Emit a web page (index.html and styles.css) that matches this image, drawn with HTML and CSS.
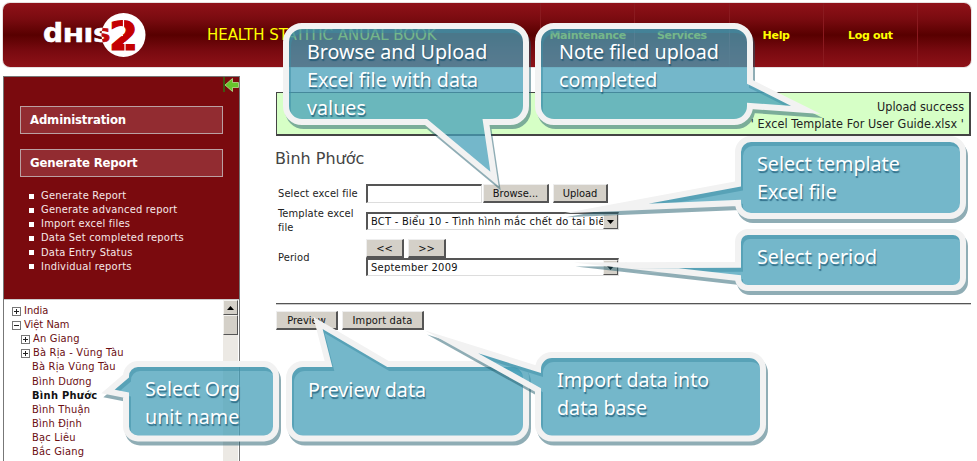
FILE: index.html
```html
<!DOCTYPE html>
<html lang="en">
<head>
<meta charset="utf-8">
<title>DHIS 2</title>
<link rel="stylesheet" href="styles.css">
</head>
<body>
<div class="page">
  <header class="header">
    <svg class="logo" width="106" height="50" viewBox="40 10 106 50">
      <defs><clipPath id="disc"><circle cx="123.500" cy="35" r="22"/></clipPath></defs>
      <circle cx="123.500" cy="35" r="22" fill="#fff"/>
      <text class="logo-d" x="43" y="42" textLength="20" lengthAdjust="spacingAndGlyphs" fill="#fff" stroke="#fff">d</text>
      <text class="logo-his" x="63" y="42" textLength="48" lengthAdjust="spacingAndGlyphs" fill="#fff" stroke="#fff">HIS</text>
      <g clip-path="url(#disc)">
        <text class="logo-his" x="63" y="42" textLength="48" lengthAdjust="spacingAndGlyphs" fill="#c00a0a" stroke="#c00a0a">HIS</text>
      </g>
      <text class="logo-two" x="109" y="49.500" textLength="29" lengthAdjust="spacingAndGlyphs" fill="#c40000" stroke="#c40000">2</text>
      <path d="M123.500 19v8M111 36.500l12-1M125 42v9" stroke="#fff" stroke-width="1.200"/>
    </svg>
    <h1 class="title">HEALTH STATITIC ANUAL BOOK</h1>
    <nav class="menu">
      <a>Maintenance</a><a>Services</a><a>Help</a><a>Log out</a>
    </nav>
  </header>

  <div class="columns">
    <aside class="sidebar">
      <div class="side-menu">
        <svg class="hide-arrow" width="16" height="16" viewBox="0 0 16 16">
          <path d="M1 0v15" stroke="#2f7010" stroke-width="1.500"/>
          <path d="M2 8l7.500-6.500v4H15.500v5H9.500v4z" fill="#66c52c" stroke="#b5e590" stroke-width=".8"/>
        </svg>
        <h2>Administration</h2>
        <h2 class="second">Generate Report</h2>
        <ul>
          <li>Generate Report</li>
          <li>Generate advanced report</li>
          <li>Import excel files</li>
          <li>Data Set completed reports</li>
          <li>Data Entry Status</li>
          <li>Individual reports</li>
        </ul>
      </div>
      <div class="tree-pane">
        <ul class="tree">
          <li class="root"><i class="box plus"></i>India</li>
          <li class="root"><i class="box"></i>Việt Nam</li>
          <li><i class="box plus"></i>An Giang</li>
          <li><i class="box plus"></i>Bà Rịa - Vũng Tàu</li>
          <li class="leaf">Bà Rịa Vũng Tàu</li>
          <li class="leaf">Bình Dương</li>
          <li class="leaf current">Bình Phước</li>
          <li class="leaf">Bình Thuận</li>
          <li class="leaf">Bình Định</li>
          <li class="leaf">Bạc Liêu</li>
          <li class="leaf">Bắc Giang</li>
        </ul>
        <div class="scrollbar">
          <div class="scroll-up"><svg width="7" height="4"><path d="M0 4l3.500-4L7 4z"/></svg></div>
          <div class="scroll-thumb"></div>
        </div>
      </div>
    </aside>

    <main class="content">
      <div class="message">Upload success<br><span class="filename">' Excel Template For User Guide.xlsx '</span></div>
      <h3>Bình Phước</h3>
      <div class="form">
        <label class="file-label">Select excel file</label>
        <div class="file-row"><span class="field"></span><span class="btn browse">Browse...</span><span class="btn upload">Upload</span></div>
        <label class="template-label">Template excel file</label>
        <div class="select"><span class="value template">BCT - Biểu 10 - Tình hình mắc chết do tai biến</span><span class="drop"><svg width="7" height="4"><path d="M0 0h7L3.500 4z"/></svg></span></div>
        <label class="period-label">Period</label>
        <div class="period">
          <div class="steps"><span class="btn">&lt;&lt;</span><span class="btn">&gt;&gt;</span></div>
          <div class="select"><span class="value">September 2009</span><span class="drop"><svg width="7" height="4"><path d="M0 0h7L3.500 4z"/></svg></span></div>
        </div>
      </div>
      <div class="rule"></div>
      <div class="actions"><span class="btn preview">Preview</span><span class="btn import">Import data</span></div>
    </main>
  </div>

  <svg class="callouts" width="977" height="461" viewBox="0 0 977 461">
    <defs>
      <path id="c5" d="M303 364H328.500L318 323L388 364H512A14 14 0 0 1 526 378V424.500A14 14 0 0 1 512 438.500H303A14 14 0 0 1 289 424.500V378A14 14 0 0 1 303 364Z"/>
      <path id="c1" d="M302 26H510A16 16 0 0 1 526 42V106A16 16 0 0 1 510 122H486L494.500 179L426 122H302A16 16 0 0 1 286 106V42A16 16 0 0 1 302 26Z"/>
      <path id="c2" d="M554 26H734A16 16 0 0 1 750 42V82L806 110L750 106A16 16 0 0 1 734 122H554A16 16 0 0 1 538 106V42A16 16 0 0 1 554 26Z"/>
      <path id="c3" d="M751 139H950A13 13 0 0 1 963 152V203A13 13 0 0 1 950 216H751A13 13 0 0 1 738 203L606 208.500L738 184V152A13 13 0 0 1 751 139Z"/>
      <path id="c4" d="M748 232H953A10 10 0 0 1 963 242V278A10 10 0 0 1 953 288H748A10 10 0 0 1 738 278L625 265.300L738 264.800V242A10 10 0 0 1 748 232Z"/>
      <path id="c6" d="M552 355H749A14 14 0 0 1 763 369V424.500A14 14 0 0 1 749 438.500H552A14 14 0 0 1 538 424.500V390L452 342L538 369A14 14 0 0 1 552 355Z"/>
      <path id="c7" d="M138 364H264A12 12 0 0 1 276 376V426.500A12 12 0 0 1 264 438.500H138A12 12 0 0 1 126 426.500V395L108 391.500L126 376A12 12 0 0 1 138 364Z"/>
    </defs>
    <g><use class="shade" href="#c1"/><use class="bubble" href="#c1"/></g>
    <g><use class="shade" href="#c2"/><use class="bubble" href="#c2"/></g>
    <g><use class="shade" href="#c3"/><use class="bubble" href="#c3"/></g>
    <g><use class="shade" href="#c4"/><use class="bubble" href="#c4"/></g>
    <g><use class="shade" href="#c5"/><use class="bubble" href="#c5"/></g>
    <g><use class="shade" href="#c6"/><use class="bubble" href="#c6"/></g>
    <g><use class="shade" href="#c7"/><use class="bubble" href="#c7"/></g>
  </svg>
  <p class="note n1">Browse and Upload<br>Excel file with data<br>values</p>
  <p class="note n2">Note filed upload<br>completed</p>
  <p class="note n3">Select template<br>Excel file</p>
  <p class="note n4">Select period</p>
  <p class="note n5">Preview data</p>
  <p class="note n6">Import data into<br>data base</p>
  <p class="note n7">Select Org<br>unit name</p>
</div>
</body>
</html>
```
FILE: styles.css
```css
* { box-sizing: border-box; }
body { margin: 0; background: #fff; }
h1, h2, h3, ul, p { margin: 0; padding: 0; font-weight: normal; list-style: none; }
.page {
  position: relative; width: 977px; height: 461px; overflow: hidden; padding: 3px 6px 0 3px;
  font: 11px/14px "DejaVu Sans Condensed", "DejaVu Sans", sans-serif; font-stretch: condensed; color: #222;
}
.header {
  height: 64px; width: 968px; border-radius: 7px; display: flex; align-items: center; overflow: hidden;
  background: linear-gradient(#901219, #7a0b10 25%, #580000 50%, #790a10 75%, #8e1118);
  box-shadow: 0 0 0 1px #e8e0e0;
}
.logo { margin-left: 37px; flex: none; }
.logo text { font-family: "DejaVu Sans", sans-serif; font-weight: bold; }
.logo-d { font-size: 26px; stroke-width: .5px; }
.logo-his { font-size: 19px; stroke-width: .6px; }
.logo-two { font-size: 39px; stroke-width: 1px; }
.title {
  margin-left: 61px; width: 333px; color: #ff0; white-space: nowrap; letter-spacing: -.05px;
  font: 15px/20px "DejaVu Sans", sans-serif; font-stretch: normal;
}
.menu { display: flex; align-self: stretch; border-right: 1px solid #8a1a1f; }
.menu a {
  width: 94.250px; border-left: 1px solid #8a1a1f; text-align: center;
  font: bold 11px/14px "DejaVu Sans", sans-serif; padding-top: 26px; color: #ff0; letter-spacing: -.3px;
}
.columns { display: flex; margin-top: 9px; }
.sidebar { width: 237px; height: 385px; border: 1px solid #777; border-bottom: 0; flex: none; }
.side-menu { height: 222px; background: #7a0a0e; padding: 0 16px; color: #fff; display: flow-root; }
.hide-arrow { display: block; margin: 0 -16px 0 auto; }
.side-menu h2 {
  height: 28px; margin-top: 13px; border: 1px solid #bba0a2; background: #922c31; padding-left: 9px;
  font: bold 13px/26px "DejaVu Sans Condensed", "DejaVu Sans", sans-serif; font-stretch: condensed; letter-spacing: -.15px;
}
.side-menu h2.second { margin-top: 15px; }
.side-menu ul { margin-top: 12px; }
.side-menu li { display: flex; align-items: center; padding-left: 9px; height: 14.150px; color: #f6e8e8; letter-spacing: .22px; }
.side-menu li::before { content: ""; width: 5px; height: 5px; background: #fff; margin-right: 7px; }
.tree-pane { display: flex; height: 162px; overflow: hidden; border-top: 1px solid #ccc; }
.tree { flex: 1; padding: 4px 0 0 17px; color: #6b0e12; white-space: nowrap; letter-spacing: .2px; }
.tree li { height: 14.120px; display: flex; align-items: center; }
.tree .root { margin-left: -9px; letter-spacing: 0; }
.tree .leaf { padding-left: 11px; }
.tree .current { font-weight: bold; color: #111; letter-spacing: .3px; }
.box {
  width: 9px; height: 9px; border: 1px solid #777; margin-right: 3px; flex: none;
  background: linear-gradient(#222, #222) center / 5px 1px no-repeat;
}
.box.plus { background: linear-gradient(#222, #222) center / 5px 1px no-repeat, linear-gradient(#222, #222) center / 1px 5px no-repeat; }
.scrollbar { width: 15px; margin-right: 1px; background: #ece9e4; }
.scroll-up, .scroll-thumb, .drop { background: #d4d0c8; border: 1px solid #f4f3f0; border-right-color: #555; border-bottom-color: #555; }
.scroll-up { height: 15px; display: flex; align-items: center; justify-content: center; }
.scroll-thumb { height: 20px; }
.content { margin-left: 36px; width: 695px; padding-top: 16px; }
.message {
  height: 44px; border: 1px solid #444; border-right-width: 2px; border-bottom-width: 2px; background: #d6ffc6;
  text-align: right; font-size: 12.500px; line-height: 17px; padding: 5px 5px 0 0; color: #222;
}
.filename { letter-spacing: .07px; }
.content h3 {
  margin: 13px 0 0 -1px; color: #444;
  font: 16px/20px "DejaVu Sans", sans-serif; font-stretch: normal;
}
.form { display: grid; grid-template-columns: 88px auto; margin: 15px 0 0 2px; align-items: center; }
.form label { letter-spacing: .12px; }
.file-label { white-space: nowrap; }
.file-row { display: flex; height: 20px; }
.field, .select { border: 1px solid #ddd; border-top: 2px solid #555; border-left: 2px solid #555; background: #fff; }
.field { width: 116px; height: 19px; }
.btn {
  height: 19px; border: 1px solid #eee; border-right: 2px solid #555; border-bottom: 2px solid #555;
  background: #d4d0c8; color: #111; text-align: center; line-height: 18px; white-space: nowrap;
}
.browse { width: 66px; margin-left: 1px; }
.upload { width: 55px; margin-left: 4px; }
.select { width: 253px; height: 18px; display: flex; overflow: hidden; }
.value { flex: 1; overflow: hidden; white-space: nowrap; padding-left: 3px; line-height: 16px; color: #111; letter-spacing: .27px; }
.drop { width: 15px; display: flex; align-items: center; justify-content: center; }
.template-label { margin: 3px 0 0; }
.period { margin-top: 4px; }
.steps { display: flex; gap: 4px; }
.steps .btn { width: 38px; }
.template-label + .select { margin-top: 3px; }
.period-label { padding-top: 5px; }
.rule { height: 2px; margin-top: 27px; border-top: 1px solid #555; border-bottom: 1px solid #ccc; }
.actions { display: flex; gap: 4px; margin-top: 6px; }
.preview { width: 62px; }
.import { width: 82px; letter-spacing: .15px; }
.callouts { position: absolute; left: 0; top: 0; }
.bubble { fill: rgba(70, 159, 184, .75); stroke: #f2f2f2; stroke-width: 6px; stroke-miterlimit: 40; }
.shade { fill: none; stroke: rgba(32, 92, 108, .5); stroke-width: 6px; stroke-miterlimit: 40; transform: translate(2px, 4px); }
.note {
  position: absolute; font: 19.700px/28px "Noto Sans", "Open Sans", sans-serif; color: #fff; white-space: nowrap;
  text-shadow: 1px 2px 1px rgba(20, 80, 110, .7);
}
.n1 { left: 307px; top: 38px; }
.n2 { left: 559px; top: 38px; }
.n3 { left: 757px; top: 150px; }
.n4 { left: 757px; top: 243px; }
.n5 { left: 308px; top: 376px; }
.n6 { left: 557px; top: 366px; }
.n7 { left: 145px; top: 375px; }
```
